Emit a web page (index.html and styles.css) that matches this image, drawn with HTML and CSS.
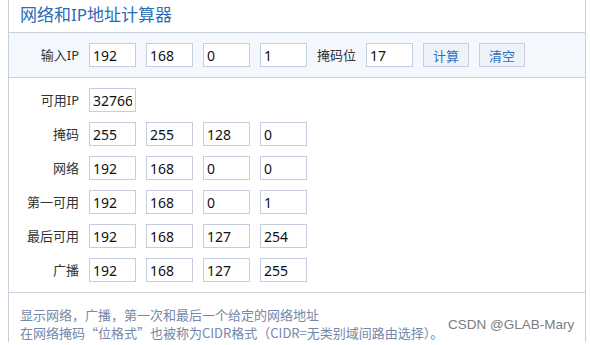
FILE: index.html
```html
<!DOCTYPE html>
<html lang="zh-CN">
<head>
  <meta charset="UTF-8" />
  <title>网络和IP地址计算器</title>
  <link rel="stylesheet" href="styles.css">
</head>
<body>

  <div class="calc">
    <div class="calc-title">网络和IP地址计算器</div>

    <div class="calc-input">
      <span class="label">输入IP</span>
      <input class="cell" type="text" value="192" />
      <input class="cell" type="text" value="168" />
      <input class="cell" type="text" value="0" />
      <input class="cell" type="text" value="1" />
      <span class="label-inline">掩码位</span>
      <input class="cell" type="text" value="17" />
      <button class="btn">计算</button>
      <button class="btn">清空</button>
    </div>

    <div class="calc-result">
      <span class="label">可用IP</span>
      <input class="cell" type="text" value="32766" />
      <span class="filler"></span>

      <span class="label">掩码</span>
      <input class="cell" type="text" value="255" />
      <input class="cell" type="text" value="255" />
      <input class="cell" type="text" value="128" />
      <input class="cell" type="text" value="0" />

      <span class="label">网络</span>
      <input class="cell" type="text" value="192" />
      <input class="cell" type="text" value="168" />
      <input class="cell" type="text" value="0" />
      <input class="cell" type="text" value="0" />

      <span class="label">第一可用</span>
      <input class="cell" type="text" value="192" />
      <input class="cell" type="text" value="168" />
      <input class="cell" type="text" value="0" />
      <input class="cell" type="text" value="1" />

      <span class="label">最后可用</span>
      <input class="cell" type="text" value="192" />
      <input class="cell" type="text" value="168" />
      <input class="cell" type="text" value="127" />
      <input class="cell" type="text" value="254" />

      <span class="label">广播</span>
      <input class="cell" type="text" value="192" />
      <input class="cell" type="text" value="168" />
      <input class="cell" type="text" value="127" />
      <input class="cell" type="text" value="255" />
    </div>

    <div class="calc-note">
      <p>显示网络，广播，第一次和最后一个给定的网络地址</p>
      <p>在网络掩码“位格式”也被称为CIDR格式（CIDR=无类别域间路由选择）。</p>
    </div>
  </div>

  <div class="watermark">CSDN @GLAB-Mary</div>

</body>
</html>
```

FILE: styles.css
```css
* { margin: 0; padding: 0; box-sizing: border-box; }

body {
  font-family: 'Noto Sans', 'Noto Sans CJK SC', sans-serif;
  background: #ffffff;
  color: #333;
  position: relative;
  height: 345px;
  overflow: hidden;
}

.calc {
  margin-left: 8px;
  width: 578px;
  border-left: 1px solid #c8d0dd;
  border-right: 1px solid #c8d0dd;
}

.calc-title {
  height: 33px;
  padding: 3px 0 0 11px;
  font-size: 17px;
  line-height: 24px;
  color: #2b6cb7;
  border-bottom: 1px solid #c8d0dd;
}

.calc-input {
  display: flex;
  align-items: center;
  gap: 10px;
  padding: 10px 0;
  background: #f4f8fc;
  border-bottom: 1px solid #c8d0dd;
}

.label {
  width: 70px;
  text-align: right;
  font-size: 13px;
  line-height: 24px;
  color: #333;
}

.label-inline {
  font-size: 13px;
  line-height: 24px;
  color: #333;
}

.cell {
  width: 47px;
  height: 24px;
  padding: 0 3px;
  border: 1px solid #c5cde0;
  background: #ffffff;
  font-family: 'Noto Sans', 'Noto Sans CJK SC', sans-serif;
  font-size: 14px;
  color: #111;
  outline: none;
}

.btn {
  width: 46px;
  height: 24px;
  border: 1px solid #c5cde0;
  background: #eef3fa;
  font-family: 'Noto Sans CJK SC', sans-serif;
  font-size: 13px;
  color: #2d6fc0;
  cursor: pointer;
}

.calc-result {
  display: grid;
  grid-template-columns: 70px repeat(4, 47px);
  gap: 10px;
  padding: 10px 0;
  border-bottom: 1px solid #c8d0dd;
}

.filler {
  grid-column: span 3;
}

.calc-note {
  padding: 13px 0 0 11px;
  font-family: 'Noto Sans CJK SC', sans-serif;
  font-size: 13px;
  line-height: 18px;
  color: #7388aa;
}

.watermark {
  position: absolute;
  left: 448px;
  top: 317px;
  font-family: 'Liberation Sans', sans-serif;
  font-size: 13.5px;
  color: #7d7d7d;
}
```
